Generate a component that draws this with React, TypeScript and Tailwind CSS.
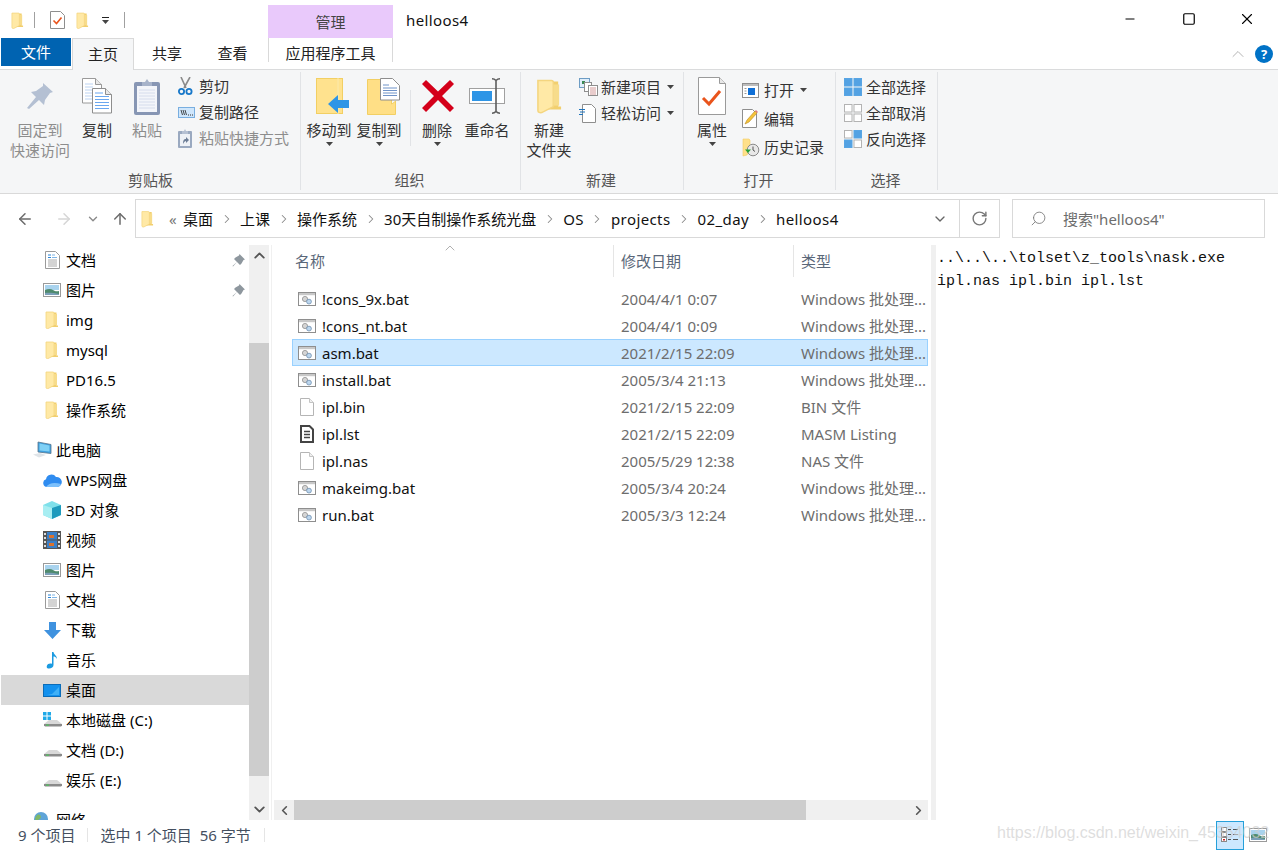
import React from "react";
import { ChevronLeft, ChevronRight, ChevronUp, ChevronDown, ArrowLeft, ArrowRight, ArrowUp, RotateCw, Search, Minus, Square, X } from "lucide-react";

// 图标
const FolderIcon = ({ w = 14, h = 18 }: { w?: number; h?: number }) => (
  <svg width={w} height={h} viewBox="0 0 14 18" className="shrink-0">
    <path d="M4 1.5h7.5v13H13V16H4z" fill="#f2cf6e" />
    <path d="M1 1h7c.6 0 1 .4 1 1v12.5L3 17.6c-1 .2-2-.2-2-1z" fill="#ffe9a6" stroke="#f4d57f" strokeWidth=".8" />
    <path d="M9 3h3v11H9z" fill="#f7dc8b" />
  </svg>
);

const BatIcon = () => (
  <svg width="18" height="14" viewBox="0 0 18 14" className="shrink-0">
    <rect x=".5" y=".5" width="17" height="13" fill="#fff" stroke="#8e8e8e" />
    <rect x="1" y="1" width="16" height="2.2" fill="#c8c8c8" />
    <circle cx="7" cy="7" r="2.6" fill="#d5d5d5" stroke="#8f8f8f" strokeWidth=".8" />
    <circle cx="11" cy="9.6" r="2.4" fill="#bcd6ee" stroke="#6e8fb0" strokeWidth=".8" />
  </svg>
);

const BlankIcon = () => (
  <svg width="16" height="18" viewBox="0 0 16 18" className="shrink-0 mx-px">
    <path d="M1.5.5h9l4 4v13h-13z" fill="#fff" stroke="#b5b5b5" />
    <path d="M10.5.5v4h4" fill="#f0f0f0" stroke="#c4c4c4" />
  </svg>
);

const LstIcon = () => (
  <svg width="16" height="18" viewBox="0 0 16 18" className="shrink-0 mx-px">
    <path d="M2 1h8.5L14 4.5V17H2z" fill="#fff" stroke="#444" strokeWidth="2" />
    <path d="M5 6.5h6M5 9.5h6M5 12.5h6" stroke="#444" strokeWidth="1.4" />
  </svg>
);

const DocIcon = () => (
  <svg width="15" height="18" viewBox="0 0 15 18">
    <path d="M.5.500h10l4 4v13H.5z" fill="#fff" stroke="#9a9a9a" />
    <path d="M3 4h3M3 6.500h3" stroke="#2b86d9" />
    <path d="M7 4h3M7 6.500h5" stroke="#7fb5e6" />
    <path d="M3 9h9M3 11h9M3 13h9M3 15h9" stroke="#a8a8a8" />
  </svg>
);

const PicIcon = () => (
  <svg width="18" height="14" viewBox="0 0 18 14">
    <rect x=".5" y=".5" width="17" height="13" fill="#fff" stroke="#9a9a9a" />
    <rect x="2" y="2" width="14" height="5" fill="#a9d3ee" />
    <path d="M2 7c3-1.500 6-1.500 8 0s4 1.500 6 1v4H2z" fill="#4f8a6d" />
    <path d="M2 10c4-.5 9 0 14 1v1H2z" fill="#7b9fb8" />
  </svg>
);

const PcIcon = () => (
  <svg width="20" height="18" viewBox="0 0 20 18">
    <path d="M6 1l13 2.500v9L6 11z" fill="#3ea0df" stroke="#59758c" strokeWidth=".8" />
    <path d="M7.500 2.600l10 2v6l-10-1z" fill="#7fd0f5" />
    <path d="M1 13.500l7-1.500 6 2-7 2.600z" fill="#dfe4e8" />
  </svg>
);

const CloudIcon = () => (
  <svg width="20" height="15" viewBox="0 0 20 15">
    <path d="M5 14a4 4 0 01-1-7.800A5.500 5.500 0 0114 4a4.600 4.600 0 011.500 10z" fill="#2f8cf0" />
    <path d="M4 14c3-4 8-5 15-3-1 2-2 3-4 3z" fill="#7cc0fb" />
  </svg>
);

const CubeIcon = () => (
  <svg width="18" height="18" viewBox="0 0 18 18">
    <path d="M9 0l9 4v10l-9 4-9-4V4z" fill="#7fe0ea" />
    <path d="M9 7l9-3v10l-9 4z" fill="#1e9bbd" />
    <path d="M0 4l9 3v11l-9-4z" fill="#a8eef2" />
  </svg>
);

const FilmIcon = () => (
  <svg width="18" height="18" viewBox="0 0 18 18">
    <rect width="18" height="18" fill="#555" />
    <rect x="1" y="2" width="2" height="2" fill="#ddd" /><rect x="1" y="6" width="2" height="2" fill="#ddd" /><rect x="1" y="10" width="2" height="2" fill="#ddd" /><rect x="1" y="14" width="2" height="2" fill="#ddd" />
    <rect x="15" y="2" width="2" height="2" fill="#ddd" /><rect x="15" y="6" width="2" height="2" fill="#ddd" /><rect x="15" y="10" width="2" height="2" fill="#ddd" /><rect x="15" y="14" width="2" height="2" fill="#ddd" />
    <rect x="4" y="1" width="10" height="7.500" fill="#3a7fc7" />
    <rect x="4" y="9.500" width="10" height="7.500" fill="#3a7fc7" />
    <rect x="6" y="4" width="5" height="3" fill="#d9722e" />
    <rect x="6" y="12" width="5" height="3" fill="#d9722e" />
  </svg>
);

const DownloadIcon = () => (
  <svg width="17" height="17" viewBox="0 0 17 17">
    <path d="M5 0h7v8h5l-8.500 9L0 8h5z" fill="#3f92df" />
  </svg>
);

const NoteIcon = () => (
  <svg width="12" height="18" viewBox="0 0 12 18">
    <path d="M6 1h1.500c.3 3 3.500 3.500 3.500 7-1-2-2.500-2.500-3.500-2.500V14c0 2-2 3.500-4.500 3.500S.500 16 1 14.500 3.500 12 6 12.800z" fill="#1b9ae0" />
  </svg>
);

const DesktopIcon = () => (
  <svg width="18" height="13" viewBox="0 0 18 13">
    <rect x=".5" y=".5" width="17" height="12" fill="#1391ee" stroke="#0b6cb8" />
    <path d="M9 10l7-7v8H4z" fill="#3fb0f7" />
  </svg>
);

const DriveIcon = ({ win }: { win?: boolean }) => (
  <svg width="19" height="16" viewBox="0 0 19 16">
    {win && (
      <g fill="#1fa9e8">
        <rect x="0" y="0" width="3.500" height="3.500" /><rect x="4.500" y="0" width="3.500" height="3.500" />
        <rect x="0" y="4.500" width="3.500" height="3.500" /><rect x="4.500" y="4.500" width="3.500" height="3.500" />
      </g>
    )}
    <path d="M1 12l5-4h8l5 4z" fill="#d8d8d8" />
    <path d="M1 12h18v1.500l-1 1H2l-1-1z" fill="#8a8a8a" />
    <rect x="3" y="12.500" width="3" height="1.200" fill="#4cc35a" />
  </svg>
);

const GlobeIcon = () => (
  <svg width="20" height="18" viewBox="0 0 20 18">
    <circle cx="11" cy="8" r="7" fill="#5fa4d8" />
    <path d="M7 4c2-1 4 0 4 2s-3 2-3 4-3-1-3-2 1-3 2-4z" fill="#7fb86a" />
    <path d="M0 13h20v4H0z" fill="#a9b7c2" opacity=".6" />
  </svg>
);

const PinSmall = () => (
  <svg width="13" height="13" viewBox="0 0 13 13">
    <path d="M7.500 0l5.500 5.500-1.500.5-2 3.500L8 11 5 8l-4 4.500L.5 12 5 8 2 5l1.500-1.500L7 1.500z" fill="#8e979e" />
  </svg>
);

const Caret = () => (
  <svg width="7" height="4" viewBox="0 0 7 4" className="shrink-0">
    <path d="M0 0h7L3.500 4z" fill="#444" />
  </svg>
);

// 功能区大图标
const PinBig = () => (
  <svg width="28" height="28" viewBox="0 0 28 28">
    <path d="M17 1l10 9-3 1-5 7-1 5-5-5-10 9-2-1 9-11-5-5 5-1 7-5z" fill="#b4c0d3" />
  </svg>
);

const CopyBig = () => (
  <svg width="30" height="36" viewBox="0 0 30 36">
    <path d="M.5.500h13l6 6V25H.5z" fill="#fff" stroke="#9a9a9a" />
    <path d="M13.500.500v6h6" fill="#e8e8e8" stroke="#9a9a9a" />
    <path d="M3 6h8M3 9h8M3 12h8M3 15h8M3 18h8M3 21h8" stroke="#bcd3f2" />
    <path d="M10.500 10.500h13l6 6V35h-19z" fill="#fff" stroke="#8e8e8e" />
    <path d="M23.500 10.500v6h6" fill="#e8e8e8" stroke="#8e8e8e" />
    <path d="M13 15h8M13 18.500h14M13 21.500h14M13 24.500h14M13 27.500h14M13 30.500h14" stroke="#6aa7f0" />
  </svg>
);

const PasteBig = () => (
  <svg width="26" height="37" viewBox="0 0 26 37">
    <rect x="0" y="4" width="26" height="33" rx="2" fill="#8796b4" />
    <rect x="3" y="8" width="20" height="26" fill="#f3f5fa" />
    <path d="M5 12h16M5 15h16M5 18h16M5 21h16M5 24h16M5 27h16M5 30h16" stroke="#d5dcec" />
    <path d="M8 8V4h3l2-3 2 3h3v4z" fill="#a7b3ca" />
  </svg>
);

const CutIcon = () => (
  <svg width="15" height="18" viewBox="0 0 15 18">
    <path d="M3 0l5 11M12 0L6 11" stroke="#8a8a8a" strokeWidth="1.600" fill="none" />
    <circle cx="3.500" cy="14.500" r="2.600" fill="none" stroke="#1878c9" strokeWidth="1.800" />
    <circle cx="11" cy="14.500" r="2.600" fill="none" stroke="#1878c9" strokeWidth="1.800" />
  </svg>
);

const PathIcon = () => (
  <svg width="17" height="11" viewBox="0 0 17 11">
    <rect x=".5" y=".5" width="16" height="10" fill="#cfe6fb" stroke="#78aee0" />
    <path d="M3 3l1.500 5M5 3l1.500 5M7 3l1.500 5" stroke="#333" strokeWidth=".9" />
    <path d="M10 8h1M12 8h1M14 8h1" stroke="#333" />
  </svg>
);

const ShortcutIcon = () => (
  <svg width="14" height="19" viewBox="0 0 14 19">
    <rect x="0" y="2" width="14" height="17" rx="1" fill="#9aa9c0" />
    <rect x="2" y="5" width="10" height="12" fill="#eef1f6" />
    <path d="M4 2h2l1-2 1 2h2v3H4z" fill="#b5c0d2" />
    <path d="M5 15c0-4 1-5 3-5V8l3 3-3 3v-2c-1 0-2 1-3 3z" fill="#6c7d96" />
  </svg>
);

const MoveBig = () => (
  <svg width="33" height="36" viewBox="0 0 33 36">
    <rect x=".5" y=".5" width="26" height="35" fill="#ffe28e" stroke="#f2cf63" />
    <path d="M22 0v36" stroke="#fbe9ac" />
    <path d="M12 26l10-9v5h11v8H22v5z" fill="#2e95e6" />
  </svg>
);

const CopyToBig = () => (
  <svg width="33" height="37" viewBox="0 0 33 37">
    <path d="M.5 1.500h24V26c2-1 3-2 4-3v13.500H.5z" fill="#ffdf86" stroke="#f2cf63" />
    <path d="M13.500.500h12l7 7V22h-19z" fill="#fff" stroke="#8e8e8e" />
    <path d="M16 7h6M16 10h14M16 12.500h14M16 15h14M16 17.500h14" stroke="#6f93c8" />
  </svg>
);

const DeleteBig = () => (
  <svg width="32" height="32" viewBox="0 0 32 32">
    <path d="M4 0l12 11.500L28 0l4 4-12 12 12 12-4 4-12-12L4 32l-4-4 12-12L0 4z" fill="#d4001a" />
  </svg>
);

const RenameBig = () => (
  <svg width="36" height="36" viewBox="0 0 36 36">
    <rect x=".5" y="10.500" width="35" height="15" fill="#fff" stroke="#a0a0a0" />
    <rect x="3" y="13" width="20" height="10" fill="#2e95e6" />
    <path d="M23 .8c2 0 3 .7 4 1.700 1-1 2-1.700 4-1.700M27 2.500v31M23 35.200c2 0 3-.7 4-1.700 1 1 2 1.700 4 1.700" stroke="#5c5c5c" strokeWidth="1.600" fill="none" />
  </svg>
);

const NewItemIcon = () => (
  <svg width="19" height="18" viewBox="0 0 19 18">
    <rect x=".5" y=".5" width="10" height="9" fill="#dfeefb" stroke="#6d9cc4" />
    <rect x="3" y="3" width="3" height="3" fill="#3a8a55" />
    <rect x="5.500" y="4.500" width="7" height="9" fill="#fff" stroke="#8e8e8e" />
    <rect x="9.500" y="7.500" width="9" height="10" fill="#fff" stroke="#8e8e8e" />
    <path d="M11 10h6M11 12h6M11 14h6M11 16h6" stroke="#d39a9a" />
  </svg>
);

const EasyIcon = () => (
  <svg width="17" height="19" viewBox="0 0 17 19">
    <path d="M3.500.500h9l4 4v14h-13z" fill="#fff" stroke="#8e8e8e" />
    <path d="M0 5.500h6M1 8h5M0 10.500h4" stroke="#1e74bd" />
  </svg>
);

const PropsBig = () => (
  <svg width="28" height="38" viewBox="0 0 28 38">
    <path d="M.5.500h21l6 6v31H.5z" fill="#fff" stroke="#9a9a9a" />
    <path d="M21.500.500v6h6" fill="#e8e8e8" stroke="#9a9a9a" />
    <path d="M5 21l6 6L22 14" fill="none" stroke="#e9541c" strokeWidth="3" />
  </svg>
);

const OpenIcon = () => (
  <svg width="17" height="15" viewBox="0 0 17 15">
    <rect x=".5" y=".5" width="16" height="14" fill="#fff" stroke="#8e8e8e" />
    <rect x="1" y="1" width="15" height="2" fill="#bdbdbd" />
    <rect x="6" y="5" width="7" height="7" fill="#0f6fd6" />
    <path d="M2.500 5.500h2M2.500 8h2M2.500 10.500h2" stroke="#9a9a9a" />
  </svg>
);

const EditIcon = () => (
  <svg width="16" height="19" viewBox="0 0 16 19">
    <path d="M.5.500h10l4 4v14H.5z" fill="#fff" stroke="#8e8e8e" />
    <path d="M3 15l2-4 8-9 2 2-8 9z" fill="#f5c33b" stroke="#b98a1c" strokeWidth=".6" />
    <path d="M13 2l2 2 1-1-2-2z" fill="#e0787f" />
  </svg>
);

const HistoryIcon = () => (
  <svg width="18" height="19" viewBox="0 0 18 19">
    <path d="M1 1h6l1 1v10l-3 5-4 1z" fill="#ffe08a" stroke="#f2cf63" strokeWidth=".6" />
    <circle cx="11" cy="12" r="5.800" fill="#e8e8e8" stroke="#8a8a8a" />
    <path d="M11 8.500V12l2 1.500" stroke="#555" fill="none" />
    <path d="M3 11.500l3 3.500 3-3.500z" fill="#27a234" />
  </svg>
);

const GridIcon = ({ mode }: { mode: "all" | "none" | "invert" }) => {
  const on = "#53a2e3";
  const off = "#ffffff";
  const line = mode === "none" ? "#b3b3b3" : "#58a5e4";
  const cells = mode === "all" ? [on, on, on, on] : mode === "none" ? [off, off, off, off] : [off, on, on, off];
  return (
    <svg width="18" height="18" viewBox="0 0 18 18">
      <rect x=".5" y=".5" width="7.500" height="7.500" fill={cells[0]} stroke={mode === "invert" ? "#b3b3b3" : line} />
      <rect x="10" y=".5" width="7.500" height="7.500" fill={cells[1]} stroke={line} />
      <rect x=".5" y="10" width="7.500" height="7.500" fill={cells[2]} stroke={line} />
      <rect x="10" y="10" width="7.500" height="7.500" fill={cells[3]} stroke={mode === "invert" ? "#b3b3b3" : line} />
    </svg>
  );
};

const CheckDoc = () => (
  <svg width="15" height="18" viewBox="0 0 15 18">
    <path d="M.5.500h10l4 4v13H.5z" fill="#fff" stroke="#8e8e8e" />
    <path d="M3.500 9.500l3 3 5-6" fill="none" stroke="#e9541c" strokeWidth="1.600" />
  </svg>
);

// 功能区按钮
const BigButton = ({ icon, lines, w = "w-[50px]", disabled, caret, iconClass = "" }: { icon: React.ReactNode; lines: string[]; w?: string; disabled?: boolean; caret?: boolean; iconClass?: string }) => (
  <div className={`${w} shrink-0 flex flex-col items-center`}>
    <div className={`h-[48px] flex items-center justify-center ${iconClass}`}>{icon}</div>
    {lines.map((l) => (
      <div key={l} className={`h-[20px] leading-[20px] whitespace-nowrap ${disabled ? "text-[#8d8d8d]" : "text-[#333]"}`}>{l}</div>
    ))}
    {caret && <div className="mt-[2px]"><Caret /></div>}
  </div>
);

const SmallButton = ({ icon, text, disabled, caret, h = "h-[26px]", gap = "w-[21px]" }: { icon: React.ReactNode; text: string; disabled?: boolean; caret?: boolean; h?: string; gap?: string }) => (
  <div className={`${h} flex items-center whitespace-nowrap ${disabled ? "text-[#8d8d8d]" : "text-[#333]"}`}>
    <div className={`${gap} shrink-0 flex items-center`}>{icon}</div>
    <span>{text}</span>
    {caret && <span className="ml-[6px]"><Caret /></span>}
  </div>
);

const Group = ({ w, label, children, pl, labelClass = "pr-[2px]" }: { w: string; label: string; children: React.ReactNode; pl: string; labelClass?: string }) => (
  <div className={`${w} h-[118px] shrink-0 flex flex-col border-r border-[#e1e3e6]`}>
    <div className={`flex-1 flex items-start ${pl}`}>{children}</div>
    <div className={`h-[20px] leading-[20px] text-center text-[#555] -mt-[2px] ${labelClass}`}>{label}</div>
  </div>
);

const navTop = [
  { icon: <DocIcon />, text: "文档", pin: true },
  { icon: <PicIcon />, text: "图片", pin: true },
  { icon: <FolderIcon />, text: "img" },
  { icon: <FolderIcon />, text: "mysql" },
  { icon: <FolderIcon />, text: "PD16.5" },
  { icon: <FolderIcon />, text: "操作系统" },
];

const navPc = [
  { icon: <CloudIcon />, text: "WPS网盘" },
  { icon: <CubeIcon />, text: "3D 对象" },
  { icon: <FilmIcon />, text: "视频" },
  { icon: <PicIcon />, text: "图片" },
  { icon: <DocIcon />, text: "文档" },
  { icon: <DownloadIcon />, text: "下载" },
  { icon: <NoteIcon />, text: "音乐" },
  { icon: <DesktopIcon />, text: "桌面", active: true },
  { icon: <DriveIcon win />, text: "本地磁盘 (C:)" },
  { icon: <DriveIcon />, text: "文档 (D:)" },
  { icon: <DriveIcon />, text: "娱乐 (E:)" },
];

const files = [
  { name: "!cons_9x.bat", date: "2004/4/1 0:07", type: "Windows 批处理...", icon: <BatIcon /> },
  { name: "!cons_nt.bat", date: "2004/4/1 0:09", type: "Windows 批处理...", icon: <BatIcon /> },
  { name: "asm.bat", date: "2021/2/15 22:09", type: "Windows 批处理...", icon: <BatIcon />, selected: true },
  { name: "install.bat", date: "2005/3/4 21:13", type: "Windows 批处理...", icon: <BatIcon /> },
  { name: "ipl.bin", date: "2021/2/15 22:09", type: "BIN 文件", icon: <BlankIcon /> },
  { name: "ipl.lst", date: "2021/2/15 22:09", type: "MASM Listing", icon: <LstIcon /> },
  { name: "ipl.nas", date: "2005/5/29 12:38", type: "NAS 文件", icon: <BlankIcon /> },
  { name: "makeimg.bat", date: "2005/3/4 20:24", type: "Windows 批处理...", icon: <BatIcon /> },
  { name: "run.bat", date: "2005/3/3 12:24", type: "Windows 批处理...", icon: <BatIcon /> },
];

const crumbs = [
  { text: "桌面" },
  { text: "上课" },
  { text: "操作系统" },
  { text: "30天自制操作系统光盘" },
  { text: "OS", latin: true },
  { text: "projects", latin: true },
  { text: "02_day", latin: true },
  { text: "helloos4", latin: true },
];

const NavRow = ({ icon, text, pin, active }: { icon: React.ReactNode; text: string; pin?: boolean; active?: boolean }) => (
  <div className={`h-[30px] shrink-0 flex items-center ml-px ${active ? "bg-[#d9d9d9]" : ""}`}>
    <div className="w-[20px] ml-[41px] mr-[4px] shrink-0 flex items-center justify-center">{icon}</div>
    <span className="text-black">{text}</span>
    {pin && <span className="ml-auto mr-[4px]"><PinSmall /></span>}
  </div>
);

export default function App() {
  return (
    <div className="w-[1278px] h-[850px] relative overflow-hidden bg-white text-[15px] leading-[20px] font-['Noto_Sans','Noto_Sans_CJK_SC',sans-serif]">
      {/* 标题栏 */}
      <div className="h-[38px] flex">
        <div className="w-[268px] shrink-0 flex items-center pl-[11px] pt-[2px]">
          <FolderIcon w={13} h={17} />
          <div className="w-px h-[16px] bg-[#a0a0a0] ml-[10px] mr-[15px]" />
          <CheckDoc />
          <div className="ml-[11px]"><FolderIcon w={13} h={17} /></div>
          <div className="ml-[13px] flex flex-col items-center gap-[2px]">
            <div className="w-[7px] h-px bg-[#222]" />
            <Caret />
          </div>
          <div className="w-px h-[16px] bg-[#a0a0a0] ml-[15px]" />
        </div>
        <div className="w-[125px] shrink-0 mt-[5px] bg-[#e9c9fb] flex items-center justify-center text-[#444]">管理</div>
        <div className="ml-[13px] pt-[10px] text-[#111] tracking-[0.4px]">helloos4</div>
        <div className="ml-auto mr-[2px] flex items-start">
          <div className="w-[58px] h-[38px] flex items-center justify-center"><Minus size={14} strokeWidth={1} absoluteStrokeWidth className="text-black" /></div>
          <div className="w-[59px] h-[38px] flex items-center justify-center"><Square size={14} strokeWidth={1.2} absoluteStrokeWidth className="text-black" /></div>
          <div className="w-[58px] h-[38px] flex items-center justify-center"><X size={18} strokeWidth={1.1} absoluteStrokeWidth className="text-black" /></div>
        </div>
      </div>

      {/* 选项卡 */}
      <div className="h-[32px] flex items-start border-b border-[#dadbdc] relative">
        <div className="w-[70px] ml-px h-[28px] bg-[#0063b1] text-white flex items-center justify-center">文件</div>
        <div className="w-[62px] ml-px h-[32px] bg-[#f5f6f7] border border-b-0 border-[#d9d9d9] flex items-start justify-center pt-[5px] text-[#222] relative z-10">主页</div>
        <div className="w-[66px] h-[30px] flex items-start justify-center pt-[5px] text-[#222]">共享</div>
        <div className="w-[65px] h-[30px] flex items-start justify-center pt-[5px] text-[#222]">查看</div>
        <div className="w-[3px]" />
        <div className="w-[125px] h-[24px] border-x border-[#d9d9d9] flex items-start justify-center pt-[5px] text-[#222] whitespace-nowrap">应用程序工具</div>
        <div className="ml-auto mr-[5px] h-[31px] flex items-center gap-[7px]">
          <ChevronUp size={20} strokeWidth={1.2} className="text-[#b5b5b5]" />
          <div className="w-[18px] h-[18px] rounded-full bg-[#0072c6] text-white text-[13px] font-bold flex items-center justify-center">?</div>
        </div>
      </div>

      {/* 功能区 */}
      <div className="h-[124px] bg-[#f5f6f7] border-b border-[#d9d9d9] flex pt-[2px] pl-px">
        <Group w="w-[300px]" label="剪贴板" pl="pl-[7px]" labelClass="pr-0">
          <BigButton icon={<PinBig />} lines={["固定到", "快速访问"]} w="w-[64px]" disabled />
          <BigButton icon={<CopyBig />} lines={["复制"]} />
          <BigButton icon={<PasteBig />} lines={["粘贴"]} disabled />
          <div className="ml-[6px] pt-[1px]">
            <SmallButton icon={<CutIcon />} text="剪切" />
            <SmallButton icon={<PathIcon />} text="复制路径" />
            <SmallButton icon={<ShortcutIcon />} text="粘贴快捷方式" disabled />
          </div>
        </Group>
        <Group w="w-[220px]" label="组织" pl="pl-[3px]">
          <BigButton icon={<MoveBig />} lines={["移动到"]} caret iconClass="ml-[7px]" />
          <BigButton icon={<CopyToBig />} lines={["复制到"]} caret iconClass="ml-[8px]" />
          <div className="w-px h-[56px] mt-[18px] ml-[6px] mr-px bg-[#e1e3e6]" />
          <BigButton icon={<DeleteBig />} lines={["删除"]} caret iconClass="ml-[1px]" />
          <BigButton icon={<RenameBig />} lines={["重命名"]} />
        </Group>
        <Group w="w-[163px]" label="新建" pl="pl-[3px]">
          <BigButton icon={<FolderIcon w={27} h={36} />} lines={["新建", "文件夹"]} />
          <div className="ml-[5px] pt-[2px]">
            <SmallButton icon={<NewItemIcon />} text="新建项目" caret gap="w-[22px]" />
            <SmallButton icon={<EasyIcon />} text="轻松访问" caret gap="w-[22px]" />
          </div>
        </Group>
        <Group w="w-[152px]" label="打开" pl="pl-[3px]">
          <BigButton icon={<PropsBig />} lines={["属性"]} caret />
          <div className="ml-[5px] pt-[4px]">
            <SmallButton icon={<OpenIcon />} text="打开" caret h="h-[28.5px]" gap="w-[22px]" />
            <SmallButton icon={<EditIcon />} text="编辑" h="h-[28.5px]" gap="w-[22px]" />
            <SmallButton icon={<HistoryIcon />} text="历史记录" h="h-[28.5px]" gap="w-[22px]" />
          </div>
        </Group>
        <Group w="w-[102px]" label="选择" pl="pl-[8px]">
          <div className="pt-[2px]">
            <SmallButton icon={<GridIcon mode="all" />} text="全部选择" gap="w-[22px]" />
            <SmallButton icon={<GridIcon mode="none" />} text="全部取消" gap="w-[22px]" />
            <SmallButton icon={<GridIcon mode="invert" />} text="反向选择" gap="w-[22px]" />
          </div>
        </Group>
      </div>

      {/* 地址栏 */}
      <div className="h-[51px] flex pt-[5px]">
        <div className="w-[135px] h-[39px] shrink-0 flex items-center">
          <ArrowLeft size={18} strokeWidth={2} className="ml-[16px] text-[#6b6b6b]" />
          <ArrowRight size={18} strokeWidth={2} className="ml-[21px] text-[#d6d6d6]" />
          <ChevronDown size={14} strokeWidth={2.4} className="ml-[13px] text-[#8a8a8a]" />
          <ArrowUp size={18} strokeWidth={2} className="ml-[11px] text-[#6b6b6b]" />
        </div>
        <div className="w-[865px] h-[39px] shrink-0 border border-[#d9d9d9] flex items-center">
          <div className="ml-[5px]"><FolderIcon w={13} h={18} /></div>
          <span className="ml-[15px] w-[14px] text-[#777]">«</span>
          {crumbs.map((c, i) => (
            <React.Fragment key={c.text}>
              <span className={`text-[#111] whitespace-nowrap ${c.latin ? "tracking-[0.4px]" : ""}`}>{c.text}</span>
              {i < crumbs.length - 1 && (
                <span className="w-[27px] flex justify-center"><ChevronRight size={14} strokeWidth={1.8} className="text-[#8a8a8a]" /></span>
              )}
            </React.Fragment>
          ))}
          <div className="ml-auto w-[68px] h-full flex items-center shrink-0">
            <div className="w-[18px] flex justify-center"><ChevronDown size={16} strokeWidth={2} className="text-[#666]" /></div>
            <div className="w-px h-full bg-[#d9d9d9] ml-[10px]" />
            <div className="flex-1 flex justify-center"><RotateCw size={17} strokeWidth={2} className="text-[#777]" /></div>
          </div>
        </div>
        <div className="ml-[12px] w-[253px] h-[39px] border border-[#d9d9d9] flex items-center text-[#6d6d6d]">
          <Search size={17} strokeWidth={1.2} className="ml-[17px] -scale-x-100 text-[#777]" />
          <span className="ml-[16px]">搜索"helloos4"</span>
        </div>
      </div>

      {/* 主体 */}
      <div className="h-[575px] flex">
        <div className="w-[249px] shrink-0 overflow-hidden flex flex-col">
          {navTop.map((n) => (
            <NavRow key={n.text + "a"} {...n} />
          ))}
          <div className="h-[10px] shrink-0" />
          <div className="h-[30px] shrink-0 flex items-center">
            <div className="w-[20px] ml-[32px] mr-[4px] shrink-0"><PcIcon /></div>
            <span className="text-black">此电脑</span>
          </div>
          {navPc.map((n) => (
            <NavRow key={n.text + "b"} {...n} />
          ))}
          <div className="h-[10px] shrink-0" />
          <div className="h-[30px] shrink-0 flex items-center">
            <div className="w-[20px] ml-[30px] mr-[6px] shrink-0"><GlobeIcon /></div>
            <span className="text-black">网络</span>
          </div>
        </div>
        <div className="w-[20px] shrink-0 bg-[#f0f0f0] flex flex-col">
          <div className="h-[98px] flex items-start justify-center pt-[2px]"><ChevronUp size={17} strokeWidth={2.6} className="text-[#555]" /></div>
          <div className="flex-1 bg-[#cdcdcd]" />
          <div className="h-[44px] flex items-end justify-center pb-[2px]"><ChevronDown size={17} strokeWidth={2.6} className="text-[#555]" /></div>
        </div>

        <div className="w-[661px] shrink-0 ml-[2px] border-l border-[#f0f0f0] flex flex-col relative">
          <ChevronUp size={16} strokeWidth={1} className="absolute left-[170px] -top-[5px] text-[#888]" />
          <div className="h-[32px] shrink-0 flex items-start text-[#5a6779]">
            <div className="w-[342px] pl-[23px] pt-[6px] h-full border-r border-[#e5e5e5]">名称</div>
            <div className="w-[180px] pl-[7px] pt-[6px] h-full border-r border-[#e5e5e5]">修改日期</div>
            <div className="pl-[7px] pt-[6px]">类型</div>
          </div>
          <div className="flex-1 pt-[8px] pl-[20px]">
            {files.map((f) => (
              <div key={f.name} className={`w-[636px] h-[27px] flex items-center border whitespace-nowrap overflow-hidden ${f.selected ? "bg-[#cce8ff] border-[#99d1ff]" : "border-transparent"}`}>
                <div className="w-[24px] ml-[5px] shrink-0 flex items-center">{f.icon}</div>
                <div className="w-[299px] shrink-0 text-[#111]">{f.name}</div>
                <div className="w-[180px] shrink-0 text-[#6d6d6d]">{f.date}</div>
                <div className="text-[#6d6d6d]">{f.type}</div>
              </div>
            ))}
          </div>
          <div className="h-[20px] shrink-0 w-[654px] ml-[2px] flex bg-[#f0f0f0]">
            <div className="w-[20px] flex items-center justify-center"><ChevronLeft size={15} strokeWidth={2.6} className="text-[#555]" /></div>
            <div className="w-[512px] bg-[#cdcdcd]" />
            <div className="ml-auto w-[20px] flex items-center justify-center"><ChevronRight size={15} strokeWidth={2.6} className="text-[#555]" /></div>
          </div>
        </div>

        <div className="w-[5px] shrink-0 ml-[-1px] bg-[#f0f0f0]" />
        <div className="pl-px pt-[2px] font-['Liberation_Mono',monospace] text-[15px] leading-[23px] text-[#111] whitespace-pre">
          <div>{"..\\..\\..\\tolset\\z_tools\\nask.exe"}</div>
          <div>ipl.nas ipl.bin ipl.lst</div>
        </div>
      </div>

      {/* 状态栏 */}
      <div className="h-[30px] flex items-center text-[#444f5f] relative">
        <span className="ml-[18px] whitespace-nowrap">9 个项目</span>
        <div className="w-px h-[14px] bg-[#e5e5e5] ml-[12px]" />
        <span className="ml-[12px] whitespace-nowrap">选中 1 个项目&nbsp;&nbsp;56 字节</span>
        <div className="w-px h-[14px] bg-[#e5e5e5] ml-[13px]" />
        <div className="ml-auto mr-[11px] flex items-center gap-[5px]">
          <div className="w-[28px] h-[29px] bg-[#cce8ff] border border-[#26a0da] flex items-center justify-center">
            <svg width="18" height="16" viewBox="0 0 18 16">
              <rect x=".5" y=".5" width="5" height="4" fill="#fff" stroke="#888" />
              <rect x=".5" y="5.500" width="5" height="4" fill="#fff" stroke="#888" />
              <rect x=".5" y="10.500" width="5" height="4" fill="#fff" stroke="#888" />
              <rect x="2" y="12" width="2" height="1.500" fill="#c22" />
              <path d="M7 2.500h3M12 2.500h5M7 7.500h3M12 7.500h5M7 12.500h3M12 12.500h5" stroke="#555" />
            </svg>
          </div>
          <PicIcon />
        </div>
        <span className="absolute left-[997px] top-[1px] font-['Liberation_Sans',sans-serif] text-[16px] leading-[24px] text-[#cfcfcf]/70 whitespace-nowrap">https://blog.csdn.net/weixin_45364032</span>
      </div>
    </div>
  );
}
